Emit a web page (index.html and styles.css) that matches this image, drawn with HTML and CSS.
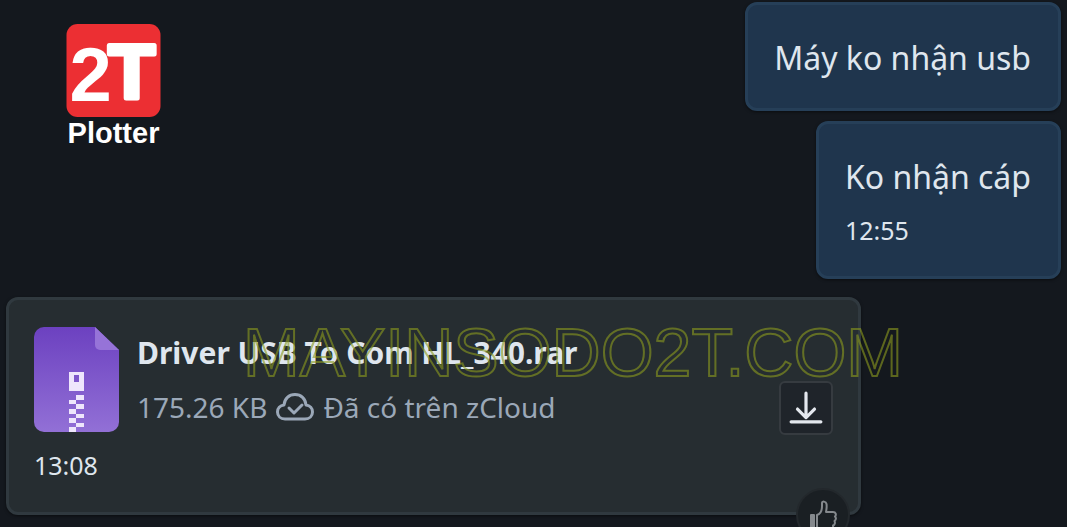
FILE: index.html
```
<!DOCTYPE html>
<html lang="vi">
<head>
<meta charset="UTF-8">
<meta name="viewport" content="width=device-width, initial-scale=1.0">
<title>2T Plotter</title>
<link rel="stylesheet" href="styles.css">
</head>
<body>

<main class="chat">
  <div class="top">
    <div class="logo">
      <svg class="logo-mark" viewBox="0 0 94 93" aria-hidden="true">
        <rect width="94" height="93" rx="11" fill="#ec2f33"/>
        <text class="logo-two" x="3" y="77">2</text>
        <text class="logo-t" x="42" y="74">T</text>
      </svg>
      <span class="logo-name">Plotter</span>
    </div>

    <div class="sent">
      <div class="bubble">
        <p class="text">Máy ko nhận usb</p>
      </div>
      <div class="bubble">
        <p class="text">Ko nhận cáp</p>
        <time class="time">12:55</time>
      </div>
    </div>
  </div>

  <div class="file-card">
    <div class="file">
      <svg class="file-icon" viewBox="0 0 85 105" aria-hidden="true">
        <defs>
          <linearGradient id="purple" x1="0" y1="0" x2="0" y2="1">
            <stop offset="0" stop-color="#6c41c0"/>
            <stop offset="1" stop-color="#9270d6"/>
          </linearGradient>
        </defs>
        <path d="M10 0H61L85 23V95a10 10 0 0 1-10 10H10A10 10 0 0 1 0 95V10A10 10 0 0 1 10 0Z" fill="url(#purple)"/>
        <path d="M61 0L85 23H66a5 5 0 0 1-5-5Z" fill="#9673d8"/>
        <path fill="#eee6fc" fill-rule="evenodd" d="M35 45H50V64H35ZM40 48V55H45V48Z"/>
        <path fill="#eee6fc" d="M42 68h8v5h-8zM35 73h7v4h-7zM42 77h8v5h-8zM35 82h7v5h-7zM42 87h8v4h-8zM35 91h7v5h-7zM42 96h8v4h-8zM35 100h7v5h-7z"/>
      </svg>
      <div class="file-info">
        <div class="file-name">Driver USB To Com HL_340.rar</div>
        <div class="file-meta">
          <span>175.26 KB</span>
          <svg class="cloud" viewBox="0 0 38 28" fill="none" stroke="currentColor" stroke-width="3" stroke-linecap="round" stroke-linejoin="round" aria-hidden="true">
            <path d="M9 26C4.500 26 1.500 23 1.500 19C1.500 15.500 4 12.500 8 12C8.500 5.500 13 1.500 19 1.500S29.500 5.500 30 12C34 12.500 36.500 15.500 36.500 19C36.500 23 33.500 26 29 26Z"/>
            <path d="M13 15l5 5 8-8"/>
          </svg>
          <span>Đã có trên zCloud</span>
        </div>
      </div>
      <button type="button" class="download" aria-label="Tải về">
        <svg viewBox="0 0 32 32" fill="none" stroke="#e4e8ee" stroke-width="3" stroke-linecap="round" stroke-linejoin="round" aria-hidden="true">
          <path d="M16 2V25M8 17l8 8 8-8M2 29H30"/>
        </svg>
      </button>
    </div>
    <time class="time">13:08</time>
    <button type="button" class="like" aria-label="Thích">
      <svg viewBox="0 0 28 30" fill="none" stroke="#85898d" stroke-width="2" stroke-linejoin="round" aria-hidden="true">
        <path d="M2 15h3v14H2z" fill="#85898d"/>
        <path d="M8 15C12 14 13 10 13 6V3C13 1 17 1 17.500 4C18 7 17.500 9 17 12H24C27 12 27.500 15 26 16.500C27.500 18 27 20 25.500 21C26.500 23 25.500 25 24 25.500C24.500 28 23 29 21 29H10L8 27Z"/>
      </svg>
    </button>
  </div>

  <div class="watermark">MAYINSODO2T.COM</div>
</main>

</body>
</html>
```
FILE: styles.css
```
* {
  box-sizing: border-box;
}

body {
  margin: 0;
  height: 100vh;
  overflow: hidden;
  background-color: #14181e;
  color: #dfe6ee;
  font-family: "Noto Sans", sans-serif;
}

.chat {
  position: relative;
  padding: 2px 6px 0;
}

.top {
  display: flex;
  justify-content: space-between;
  align-items: flex-start;
}

.logo {
  display: flex;
  flex-direction: column;
  align-items: center;
  margin: 22px 0 0 60px;
}

.logo-mark {
  width: 95px;
  height: 93px;
}

.logo-two,
.logo-t {
  fill: #fff;
  font-family: "Liberation Sans", sans-serif;
  font-size: 76px;
  font-weight: bold;
}

.logo-t {
  stroke: #fff;
  stroke-width: 5px;
  stroke-linejoin: round;
}

.logo-name {
  color: #fff;
  font-family: "Liberation Sans", sans-serif;
  font-size: 29px;
  font-weight: bold;
  line-height: 32px;
}

.sent {
  display: flex;
  flex-direction: column;
  align-items: flex-end;
  gap: 10px;
}

.bubble {
  padding: 29px 27px 27px 26px;
  border: 3px solid #263f58;
  border-radius: 12px;
  background-color: #1f354d;
  box-shadow: 0 1px 3px rgba(0, 0, 0, 0.5);
}

.text {
  margin: 0;
  font-size: 32px;
  line-height: 47px;
}

.time {
  display: block;
  margin-top: 11px;
  font-size: 25px;
  line-height: 38px;
}

.file-card {
  position: relative;
  width: 81%;
  margin-top: 18px;
  padding: 27px 25px 28px;
  border: 3px solid #30393f;
  border-radius: 12px;
  background-color: #262d31;
  box-shadow: 0 1px 3px rgba(0, 0, 0, 0.5);
}

.file {
  display: flex;
}

.file-icon {
  width: 85px;
  height: 105px;
  margin-right: 18px;
}

.file-info {
  flex: 1;
}

.file-name {
  font-size: 30px;
  font-weight: bold;
  line-height: 52px;
}

.file-meta {
  display: flex;
  align-items: center;
  gap: 9px;
  color: #9ba8b8;
  font-size: 28px;
  line-height: 56px;
}

.cloud {
  width: 38px;
  height: 28px;
}

.download {
  display: flex;
  justify-content: center;
  align-items: center;
  align-self: flex-end;
  width: 54px;
  height: 54px;
  padding: 0;
  border: 2px solid #363b40;
  border-radius: 6px;
  background-color: #1f242a;
  cursor: pointer;
}

.download svg {
  width: 34px;
  height: 34px;
}

/* sits on the bottom edge of the card */
.like {
  position: absolute;
  right: 8px;
  bottom: -30px;
  display: flex;
  justify-content: center;
  align-items: center;
  width: 54px;
  height: 54px;
  padding: 0;
  border: 2px solid #23282c;
  border-radius: 50%;
  background-color: #1a1f23;
  cursor: pointer;
}

.like svg {
  width: 28px;
  height: 32px;
}

.watermark {
  position: absolute;
  top: 313px;
  left: 243px;
  color: transparent;
  font-family: "Liberation Sans", sans-serif;
  font-size: 68px;
  line-height: 78px;
  white-space: nowrap;
  pointer-events: none;
  -webkit-text-stroke: 2px rgba(140, 155, 30, 0.6);
}
```
